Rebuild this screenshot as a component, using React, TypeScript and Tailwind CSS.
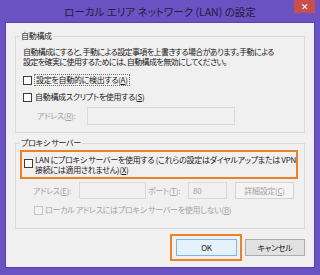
import React from 'react'

const jp = "font-['Noto_Sans_CJK_JP','Noto_Sans',sans-serif] [font-feature-settings:'palt']"

const Box: React.FC<{ disabled?: boolean }> = ({ disabled }) => (
  <span
    className={
      'inline-block w-[9px] h-[9px] shrink-0 border ' +
      (disabled ? 'border-[#c4c4c4] bg-[#f2f2f2]' : 'border-[#3c3c3c] bg-white')
    }
  />
)

const U: React.FC<{ children: React.ReactNode }> = ({ children }) => (
  <span className="underline underline-offset-1">{children}</span>
)

export default function App() {
  return (
    <div className={`w-[320px] h-[275px] bg-[#6b52c2] flex flex-col px-[5px] pb-[7px] text-[8px] tracking-[-0.3px] leading-[10px] text-[#1a1a1a] ${jp}`}>
      {/* Title bar */}
      <div className="grid grid-cols-[1fr_auto_1fr] h-[22px]">
        <div />
        <div className="self-center text-[10.5px] tracking-normal leading-[12px] text-[#241c3c] pt-[1px]">
          ローカル エリア ネットワーク (LAN) の設定
        </div>
        <div className="justify-self-end self-start w-[21px] h-[13px] bg-[#c8504c] flex items-center justify-center text-white text-[9px] leading-none">
          ✕
        </div>
      </div>

      {/* Content */}
      <div className="flex-1 min-w-0 bg-[#f0f0f0] border border-[#5a43ad] px-[9px] pt-[7px] pb-[3px] flex flex-col">
        <fieldset className="min-w-0 border border-[#dadada] pl-[7px] pr-[7px] pb-[7px]">
          <legend className="-ml-[3px] px-[1px] h-[12px] leading-[12px]">自動構成</legend>
          <div className="mt-[5px] whitespace-nowrap tracking-[-0.6px]">
            自動構成にすると、手動による設定事項を上書きする場合があります。手動による
            <br />
            設定を確実に使用するためには、自動構成を無効にしてください。
          </div>
          <div className="mt-[7px] h-[12px] flex items-center">
            <Box />
            <span className="ml-[2px] px-[1px] border border-dotted border-[#6a6a6a] leading-[10px]">
              設定を自動的に検出する(<U>A</U>)
            </span>
          </div>
          <div className="mt-[5px] h-[12px] flex items-center">
            <Box />
            <span className="ml-[3px]">
              自動構成スクリプトを使用する(<U>S</U>)
            </span>
          </div>
          <div className="mt-[4px] h-[18px] flex items-center text-[#a3a3a3]">
            <span className="ml-[14px] w-[50px]">
              アドレス(<U>R</U>):
            </span>
            <div className="w-[148px] h-[18px] border border-[#d9d9d9] bg-[#f0f0f0]" />
          </div>
        </fieldset>

        <fieldset className="min-w-0 mt-[4px] border border-[#dadada] pl-[4px] pr-[6px] pb-[12px]">
          <legend className="ml-[0px] px-[1px] h-[12px] leading-[12px]">プロキシ サーバー</legend>
          <div className="mt-[1px] border-2 border-[#ec8228] pl-[2px] pt-[3px] pb-[2px] flex items-start">
            <div className="h-[10px] flex items-center mt-[3px]">
              <Box />
            </div>
            <div className="ml-[2px] whitespace-nowrap">
              LAN にプロキシ サーバーを使用する (これらの設定はダイヤルアップまたは VPN
              <br />
              接続には適用されません)(<U>X</U>)
            </div>
          </div>
          <div className="mt-[3px] h-[17px] flex items-center text-[#a3a3a3]">
            <span className="ml-[13px] w-[46px]">
              アドレス(<U>E</U>):
            </span>
            <div className="w-[67px] h-[17px] border border-[#d9d9d9] bg-[#f0f0f0]" />
            <span className="ml-[2px] w-[40px]">
              ポート(<U>T</U>):
            </span>
            <div className="w-[39px] h-[17px] border border-[#d9d9d9] bg-[#f0f0f0] flex items-center pl-[4px]">
              80
            </div>
            <div className="ml-[8px] w-[59px] h-[17px] border border-[#d4d4d4] bg-[#f4f4f4] flex items-center justify-center">
              詳細設定(<U>C</U>)
            </div>
          </div>
          <div className="mt-[5px] h-[12px] flex items-center text-[#a3a3a3]">
            <span className="ml-[14px] flex">
              <Box disabled />
            </span>
            <span className="ml-[2px]">
              ローカル アドレスにはプロキシ サーバーを使用しない(<U>B</U>)
            </span>
          </div>
        </fieldset>

        <div className="mt-[5px] flex justify-end items-center">
          <div className="border-2 border-[#ec8228] pl-[4px] pr-[3px] py-[3px]">
            <div className="w-[61px] h-[17px] border border-[#7eb4ea] bg-[#e5f1fb] flex items-center justify-center">
              OK
            </div>
          </div>
          <div className="ml-[3px] w-[60px] h-[17px] border border-[#adadad] bg-[#e1e1e1] flex items-center justify-center">
            キャンセル
          </div>
        </div>
      </div>
    </div>
  )
}
